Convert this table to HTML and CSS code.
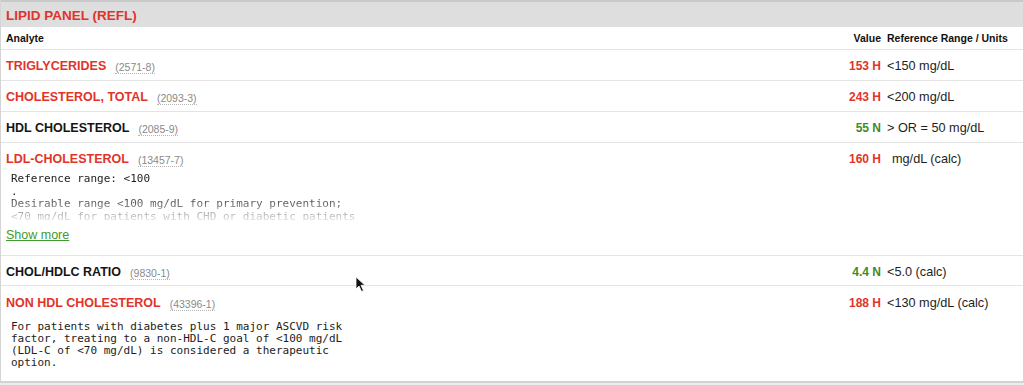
FILE: index.html
```html
<!DOCTYPE html>
<html>
<head>
<meta charset="utf-8">
<title>Lipid Panel</title>
<link rel="stylesheet" href="styles.css">
</head>
<body>
<div class="panel">
  <div class="panel-head">LIPID PANEL (REFL)</div>
  <div class="row row-cols">
    <div class="col-analyte">Analyte</div>
    <div class="col-value">Value</div>
    <div class="col-ref">Reference Range / Units</div>
  </div>

  <div class="row">
    <div class="analyte"><div class="title"><span class="name high">TRIGLYCERIDES</span><span class="code">(2571-8)</span></div></div>
    <div class="value high">153 H</div>
    <div class="ref">&lt;150 mg/dL</div>
  </div>

  <div class="row">
    <div class="analyte"><div class="title"><span class="name high">CHOLESTEROL, TOTAL</span><span class="code">(2093-3)</span></div></div>
    <div class="value high">243 H</div>
    <div class="ref">&lt;200 mg/dL</div>
  </div>

  <div class="row">
    <div class="analyte"><div class="title"><span class="name">HDL CHOLESTEROL</span><span class="code">(2085-9)</span></div></div>
    <div class="value normal">55 N</div>
    <div class="ref">&gt; OR = 50 mg/dL</div>
  </div>

  <div class="row row-ldl">
    <div class="analyte">
      <div class="title"><span class="name high">LDL-CHOLESTEROL</span><span class="code">(13457-7)</span></div>
      <div class="note note-fade">Reference range: &lt;100
.
Desirable range &lt;100 mg/dL for primary prevention;
&lt;70 mg/dL for patients with CHD or diabetic patients</div>
      <a class="show-more" href="#">Show more</a>
    </div>
    <div class="value high">160 H</div>
    <div class="ref ref-pad">mg/dL (calc)</div>
  </div>

  <div class="row row-short">
    <div class="analyte"><div class="title"><span class="name">CHOL/HDLC RATIO</span><span class="code">(9830-1)</span></div></div>
    <div class="value normal">4.4 N</div>
    <div class="ref">&lt;5.0 (calc)</div>
  </div>

  <div class="row row-last">
    <div class="analyte">
      <div class="title"><span class="name high">NON HDL CHOLESTEROL</span><span class="code">(43396-1)</span></div>
      <div class="note note-plain">For patients with diabetes plus 1 major ASCVD risk
factor, treating to a non-HDL-C goal of &lt;100 mg/dL
(LDL-C of &lt;70 mg/dL) is considered a therapeutic
option.</div>
    </div>
    <div class="value high">188 H</div>
    <div class="ref">&lt;130 mg/dL (calc)</div>
  </div>
</div>
<svg class="cursor" width="11" height="17" viewBox="0 0 11 17"><path d="M1 1 L1 13 L4 10 L6.5 15.5 L8.5 14.6 L6 9.3 L10 9.3 Z" fill="#111" stroke="#fff" stroke-width="0.8"/></svg>
</body>
</html>
```

FILE: styles.css
```css
html, body {
  margin: 0;
  padding: 0;
  background: #ececec;
}
body {
  font-family: "Liberation Sans", Arial, Helvetica, sans-serif;
  color: #1a1a1a;
  width: 1024px;
  height: 385px;
  overflow: hidden;
  position: relative;
}
.panel {
  background: #fff;
  border-left: 1px solid #d4d4d4;
  border-right: 1px solid #d4d4d4;
  border-bottom: 2px solid #d2d2d2;
  box-sizing: border-box;
  width: 1024px;
}
.panel-head {
  background: #dedede;
  border-top: 2px solid #c9c9c9;
  padding: 6px 5px 4px;
  height: 15px;
  line-height: 15px;
  font-size: 13.5px;
  font-weight: bold;
  color: #e2332a;
}
.row {
  display: grid;
  grid-template-columns: 1fr auto 131px;
  column-gap: 6px;
  padding: 9px 5px 6px;
  border-bottom: 1px solid #e4e4e4;
  font-size: 12px;
  line-height: 15px;
  align-items: start;
}
.row > div {
  min-height: 15px;
}
.row-cols {
  padding: 4px 5px 3px;
  font-size: 10.5px;
  font-weight: bold;
  color: #111;
}
.row-cols > div {
  height: 15px;
}
.col-value {
  text-align: right;
}
.row-short {
  padding-bottom: 5px;
}
.row-ldl {
  padding-bottom: 12px;
}
.row-last {
  border-bottom: none;
  padding-top: 10px;
  padding-bottom: 12px;
}
.title {
  display: flex;
  align-items: center;
  height: 15px;
}
.name {
  font-size: 12.5px;
  line-height: 15px;
  font-weight: bold;
  color: #151515;
}
.name.high {
  color: #e2332a;
}
.code {
  font-size: 10.5px;
  line-height: 12px;
  color: #8a8a8a;
  margin-left: 9px;
  margin-top: 2px;
  border-bottom: 1px dotted #b5b5b5;
}
.value {
  font-size: 12px;
  height: 15px;
  font-weight: bold;
  text-align: right;
}
.value.high {
  color: #e2332a;
}
.value.normal {
  color: #3d8c2c;
}
.ref {
  font-size: 12.7px;
  height: 15px;
  color: #1e1e1e;
}
.ref-pad {
  padding-left: 5px;
}
.note {
  font-family: "DejaVu Sans Mono", "Liberation Mono", monospace;
  font-size: 11px;
  white-space: pre;
  color: #1c1c1c;
  padding-left: 5px;
}
.note-fade {
  margin-top: 6px;
  line-height: 12.5px;
  height: 47px;
  overflow: hidden;
  -webkit-mask-image: linear-gradient(to bottom, #000 0%, #000 45%, rgba(0,0,0,0.6) 70%, rgba(0,0,0,0.15) 100%);
  mask-image: linear-gradient(to bottom, #000 0%, #000 45%, rgba(0,0,0,0.6) 70%, rgba(0,0,0,0.15) 100%);
}
.note-plain {
  margin-top: 10px;
  line-height: 12px;
}
.show-more {
  display: block;
  margin-top: 8px;
  font-size: 12.5px;
  line-height: 15px;
  height: 15px;
  color: #3f9a2f;
  text-decoration: underline;
  width: max-content;
}
.cursor {
  position: absolute;
  left: 355px;
  top: 276px;
}
```
